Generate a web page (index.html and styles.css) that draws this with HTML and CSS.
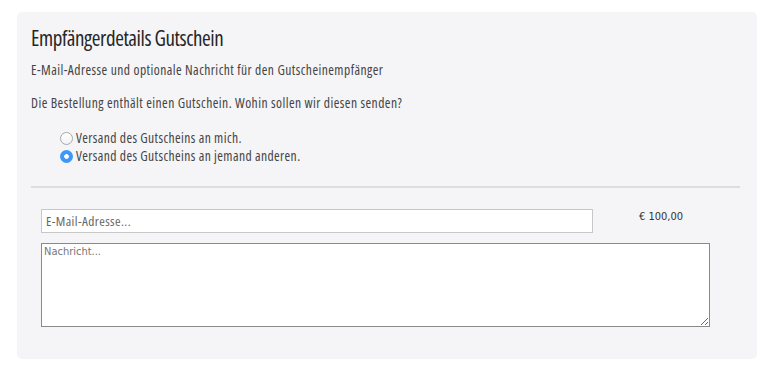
FILE: index.html
```html
<!DOCTYPE html>
<html lang="de">
<head>
    <meta charset="UTF-8">
    <meta name="viewport" content="width=device-width, initial-scale=1.0">
    <title>Empfängerdetails Gutschein</title>
    <link rel="stylesheet" href="styles.css">
</head>
<body>
    <div class="panel">
        <h2 class="panel-title">Empfängerdetails Gutschein</h2>
        <p class="hint">E-Mail-Adresse und optionale Nachricht für den Gutscheinempfänger</p>
        <p class="question">Die Bestellung enthält einen Gutschein. Wohin sollen wir diesen senden?</p>

        <div class="choices">
            <label class="choice"><input type="radio" name="versand" value="self">Versand des Gutscheins an mich.</label>
            <label class="choice"><input type="radio" name="versand" value="other" checked>Versand des Gutscheins an jemand anderen.</label>
        </div>

        <hr class="divider">

        <div class="recipient">
            <div class="recipient-row">
                <input type="email" class="email" placeholder="E-Mail-Adresse...">
                <span class="amount">€ 100,00</span>
            </div>
            <textarea class="message" placeholder="Nachricht..."></textarea>
        </div>
    </div>
</body>
</html>
```

FILE: styles.css
```css
body {
    margin: 0;
    padding: 12px 16px 12px 17px;
    background-color: #fff;
    font-family: 'Open Sans', 'DejaVu Sans Condensed', sans-serif;
    font-stretch: condensed;
    color: #444;
}
.panel {
    width: 709px;
    padding: 13px 17px 32px 14px;
    background-color: #f5f4f7;
    border-radius: 5px;
}
.panel-title {
    margin: 0;
    font-size: 21px;
    line-height: 26px;
    letter-spacing: -0.4px;
    font-weight: normal;
    color: #262626;
}
.hint, .question {
    margin: 10px 0 0;
    font-size: 13.6px;
    line-height: 18px;
    letter-spacing: 0.45px;
}
.question {
    margin-top: 15px;
}
.choices {
    margin-top: 17px;
    padding-left: 29px;
}
.choice {
    display: flex;
    align-items: center;
    font-size: 13.6px;
    line-height: 18px;
    letter-spacing: 0.4px;
}
.choice input {
    appearance: none;
    -webkit-appearance: none;
    width: 13px;
    height: 13px;
    margin: 0 3px 0 0;
    border: 1px solid #a8a8a8;
    border-radius: 50%;
    background: linear-gradient(#fff, #f2f2f2);
    box-sizing: border-box;
}
.choice input:checked {
    border: none;
    background: radial-gradient(circle, #fff 0 2px, #3d97f5 2.6px);
}
.divider {
    margin: 21px 0 0;
    border: none;
    height: 2px;
    background-color: #dddce0;
}
.recipient {
    margin-top: 21px;
    padding-left: 10px;
}
.recipient-row {
    display: flex;
    align-items: flex-start;
    gap: 46px;
}
.email {
    width: 552px;
    height: 24px;
    box-sizing: border-box;
    margin: 0;
    padding: 0 4px;
    border: 1px solid #c8c8c8;
    background: #fff;
    font-family: inherit;
    font-stretch: condensed;
    font-size: 13.4px;
    letter-spacing: 0.4px;
    color: #333;
}
.email::placeholder {
    color: #666;
}
.amount {
    padding-top: 1px;
    font-family: 'DejaVu Sans Condensed', 'Liberation Sans', sans-serif;
    font-stretch: normal;
    font-size: 11px;
    color: #333;
}
.message {
    display: block;
    width: 669px;
    height: 84px;
    box-sizing: border-box;
    margin: 10px 0 0;
    padding: 1px 2px;
    border: 1px solid #8a8a8a;
    background: #fff;
    font-family: 'DejaVu Sans Condensed', 'Liberation Sans', sans-serif;
    font-stretch: normal;
    font-size: 11px;
}
.message::placeholder {
    color: #777;
}
```
